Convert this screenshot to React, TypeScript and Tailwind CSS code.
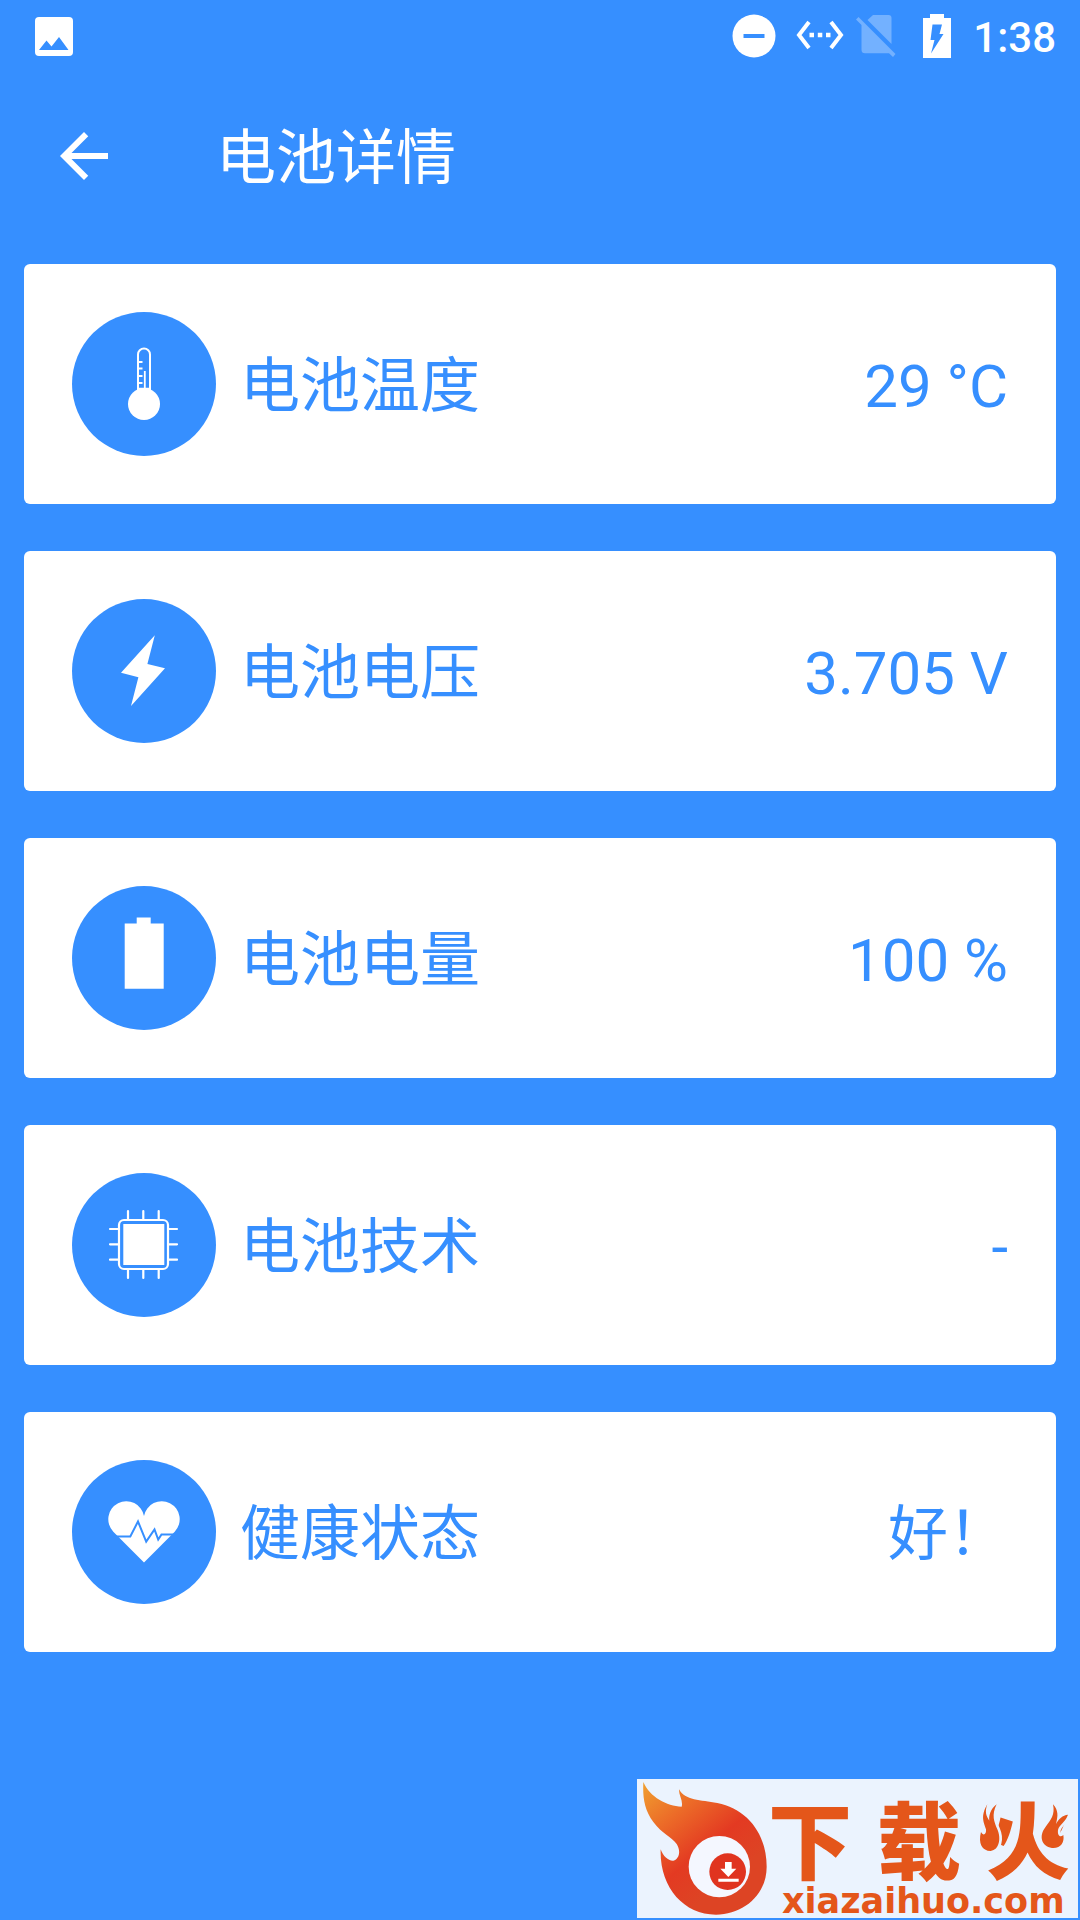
/** 电池详情页面 */
import type { ReactNode } from 'react';

interface BatteryItem {
  label: string;
  value: string;
  icon: ReactNode;
}

const ThermometerIcon = () => (
  <svg viewBox="-6 -6 84 84" className="size-21" fill="none" stroke="white" strokeWidth="2" aria-hidden="true">
    <circle cx="36" cy="56" r="16" fill="white" stroke="none" />
    <path d="M30 42V6.5a5.8 5.8 0 0 1 12 0V42" />
    <path d="M30 14h4.5M30 20.5h4.5M30 28h4.5M30 35h4.5M36.8 23v19" strokeWidth="1.8" />
    <path d="M30 40.5h12" strokeWidth="1.5" />
  </svg>
);

const BoltIcon = () => (
  <svg viewBox="-6 -6 84 84" className="size-21" fill="white" aria-hidden="true">
    <path d="M46.8 0.3 39.4 29 57 33.3 23 71 30.4 42.3 13 37.7Z" />
  </svg>
);

const BatteryIcon = () => (
  <svg viewBox="-6 -6 84 84" className="size-21" fill="white" aria-hidden="true">
    <path d="M28.7 -4.5h14v6h13V66.7H16.7V1.5h12Z" />
  </svg>
);

const ChipIcon = () => (
  <svg viewBox="-6 -6 84 84" className="size-21" fill="none" stroke="white" strokeWidth="2.2" strokeLinecap="round" aria-hidden="true">
    <rect x="11" y="11" width="49" height="49" rx="5" />
    <rect x="15.3" y="15" width="41" height="41" fill="white" stroke="none" />
    <path d="M20 2v9M35.3 2v9M50.7 2v9M20 60v9M35.3 60v9M50.7 60v9" />
    <path d="M2 20h9M2 35.3h9M2 50.7h9M60 20h9M60 35.3h9M60 50.7h9" />
  </svg>
);

const HeartIcon = () => (
  <svg viewBox="-6 -6 84 84" className="size-21" aria-hidden="true">
    <path d="M36 66.6 5.3 35.7A18 18 0 1 1 36 20 18 18 0 1 1 66.7 35.7Z" fill="white" />
    <path d="M5 40.4h17.3L30 25.5 38.2 45.6 46.5 33.5 50.2 43.6 53.5 38.4H70" fill="none" stroke="#368fff" strokeWidth="2" />
  </svg>
);

const items: BatteryItem[] = [
  { label: '电池温度', value: '29 °C', icon: <ThermometerIcon /> },
  { label: '电池电压', value: '3.705 V', icon: <BoltIcon /> },
  { label: '电池电量', value: '100 %', icon: <BatteryIcon /> },
  { label: '电池技术', value: '-', icon: <ChipIcon /> },
  { label: '健康状态', value: '好！', icon: <HeartIcon /> },
];

function StatusBar() {
  return (
    <div className="flex h-18 items-center justify-between pl-[35px] pr-6">
      <svg viewBox="0 0 38 40" className="h-10 w-[38px]" aria-hidden="true">
        <rect y="1" width="38" height="39" rx="4" fill="white" />
        <path d="M4 34 11.5 24.5 16.5 30.5 24 21 33.5 34Z" fill="#368fff" />
      </svg>
      <div className="flex items-center">
        {/* 勿扰 */}
        <svg viewBox="0 0 44 44" className="size-11" aria-hidden="true">
          <circle cx="22" cy="22" r="21.5" fill="white" />
          <path d="M11.5 22h21" stroke="#368fff" strokeWidth="4" />
        </svg>
        <svg viewBox="0 0 48 44" className="ml-5 h-11 w-12" fill="none" stroke="white" strokeWidth="4" aria-hidden="true">
          <path d="M13 8 3 21 13 34M35 8 45 21 35 34" />
          <path d="M13.5 21H18M21.8 21h4.5M30 21h4.5" strokeWidth="4.6" />
        </svg>
        {/* 无 SIM 卡 */}
        <svg viewBox="0 0 40 44" className="ml-3 h-11 w-10" fill="white" opacity="0.3" aria-hidden="true">
          <path d="M17 1h15.5a3 3 0 0 1 3 3v26L11.5 6Z" />
          <path d="M2.5 3 39.5 40 37 43 33 39.3H9a3.5 3.5 0 0 1-3.5-3.5V11L0 5.5Z" />
        </svg>
        <svg viewBox="0 0 28 44" className="ml-[27px] h-11 w-7" aria-hidden="true">
          <path d="M7 0h14v4h7v40H0V4h7Z" fill="white" />
          <path d="M9.5 10.5H19L16.5 20h4L8 39.5 11.5 26H7.5Z" fill="#368fff" />
        </svg>
        <time className="ml-[22px] pt-1 text-[42px] leading-11 font-medium">1:38</time>
      </div>
    </div>
  );
}

function BatteryCard({ label, value, icon }: BatteryItem) {
  return (
    <li className="flex items-center rounded-md bg-white p-12 text-[60px] leading-18 text-[#368fff]">
      <span className="mr-6 flex size-36 shrink-0 items-center justify-center rounded-full bg-[#368fff]">{icon}</span>
      <span className="pt-1.5">{label}</span>
      <span className="ml-auto pt-1.5">{value}</span>
    </li>
  );
}

function SiteLogo() {
  return (
    <a
      href="#"
      className="relative mt-auto mr-0.5 mb-0.5 flex h-[139px] w-[441px] self-end bg-[#ebf3fe] text-[#e4561a]"
    >
      <svg viewBox="21 27 393 417" className="h-[139px] w-[131px] shrink-0" aria-hidden="true">
        <defs>
          <linearGradient id="flame" x1="0" y1="0" x2="0.6" y2="0.8">
            <stop offset="0" stopColor="#f0a030" />
            <stop offset="0.35" stopColor="#ec6b28" />
            <stop offset="0.7" stopColor="#e33a22" />
            <stop offset="1" stopColor="#dd4424" />
          </linearGradient>
        </defs>
        <path
          d="M40 36C60 82 110 108 155 110 160 92 146 76 147 58 165 92 212 90 262 99 350 116 410 190 410 290 410 375 340 434 258 434 160 434 88 350 92 238 100 260 115 273 130 272 150 266 152 240 140 222 125 200 96 192 70 156 42 118 38 80 40 36Z"
          fill="url(#flame)"
        />
        <circle cx="268" cy="290" r="92" fill="#f4f7ff" />
        <circle cx="293" cy="305" r="55" fill="#e0341f" />
        <path d="M285 276h20v20h14l-24 25-24-25h14ZM265 326h61v9h-61Z" fill="white" />
      </svg>
      <div className="flex flex-1 flex-col pr-2 pt-3">
        <div className="flex justify-between font-['Noto_Sans_CJK_SC',sans-serif] text-[84px] leading-[92px] font-black">
          <span>下</span>
          <span>载</span>
          <span>火</span>
        </div>
        <span className="pt-1 pl-3.5 font-['DejaVu_Sans',sans-serif] text-[35px] leading-7 font-bold">xiazaihuo.com</span>
      </div>
      {/* “火”字两侧的火苗 */}
      <svg
        viewBox="21 27 1323 417"
        className="absolute inset-0 size-full"
        fill="#e4561a"
        stroke="#ebf3fe"
        strokeWidth="16"
        paintOrder="stroke"
        aria-hidden="true"
      >
        <path d="M1072 103C1050 140 1062 158 1068 178 1070 192 1060 200 1053 186 1044 220 1056 243 1082 243 1108 240 1114 205 1102 178 1092 155 1084 135 1100 103 1080 118 1076 140 1078 152 1068 138 1064 125 1072 103Z" />
        <path d="M1269 103C1276 135 1262 150 1246 172 1226 198 1234 230 1266 234 1292 236 1304 218 1300 195 1290 204 1282 196 1284 180 1288 162 1304 160 1314 134 1298 136 1286 146 1278 162 1284 138 1286 122 1269 103Z" />
      </svg>
    </a>
  );
}

export default function App() {
  return (
    <div className="flex min-h-screen flex-col bg-[#368fff] font-['Roboto','Noto_Sans_CJK_SC',sans-serif] text-white">
      <StatusBar />
      <header className="flex h-[168px] items-center px-12">
        <button type="button" aria-label="返回" className="mr-24">
          <svg viewBox="0 0 24 24" className="size-18" fill="white" aria-hidden="true">
            <path d="M20 11H7.83l5.59-5.59L12 4l-8 8 8 8 1.41-1.41L7.83 13H20v-2z" />
          </svg>
        </button>
        <h1 className="pt-1.5 text-[60px] leading-18">电池详情</h1>
      </header>
      <ul className="flex flex-col gap-[47px] px-6 pt-6">
        {items.map((item) => (
          <BatteryCard key={item.label} {...item} />
        ))}
      </ul>
      <SiteLogo />
    </div>
  );
}
